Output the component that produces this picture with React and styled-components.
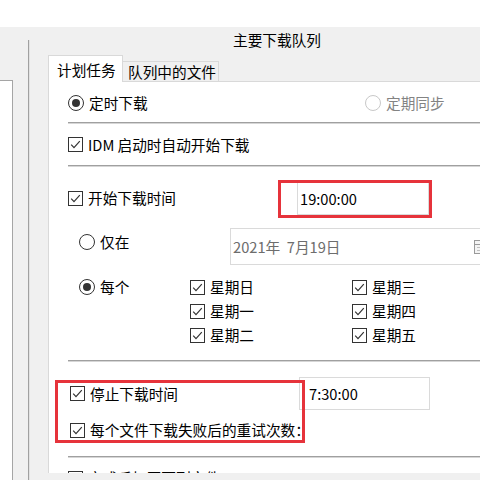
import React from "react";
import styled, { createGlobalStyle } from "styled-components";

const Global = createGlobalStyle`
  html, body { margin: 0; padding: 0; background: #ffffff; }
  body { font-family: "Noto Sans CJK SC", "Noto Sans", sans-serif; }
  * { box-sizing: border-box; }
`;

const Screen = styled.div`
  width: 480px;
  height: 480px;
  overflow: hidden;
  display: flex;
  flex-direction: column;
  background: #ffffff;
  font-family: "Noto Sans CJK SC", "Noto Sans", sans-serif;
  font-size: 14.67px;
  color: #000;
`;

const TopBand = styled.div`
  height: 27px;
  flex: none;
  background: #ffffff;
`;

const Body = styled.div`
  flex: 1;
  display: flex;
  background: #f0f0f0;
  min-height: 0;
`;

const LeftPane = styled.div`
  width: 28px;
  flex: none;
  padding-top: 53px;
`;

const ListBox = styled.div`
  width: 13px;
  height: 100%;
  background: #ffffff;
  border-top: 1px solid #a5a5a5;
  border-right: 1px solid #a5a5a5;
`;

const VDivider = styled.div`
  width: 2px;
  flex: none;
  margin-top: 13px;
  border-left: 1px solid #a0a0a0;
  border-right: 1px solid #e2e2e2;
`;

const Main = styled.div`
  flex: 1;
  min-width: 0;
  display: flex;
  flex-direction: column;
`;

const Title = styled.div`
  height: 28px;
  padding-left: 203px;
  padding-top: 3px;
  line-height: 20px;
  white-space: nowrap;
`;

const TabRow = styled.div`
  display: flex;
  align-items: flex-end;
  height: 26px;
  margin-left: 18px;
  position: relative;
  z-index: 2;
`;

const Tab = styled.div`
  white-space: nowrap;
  line-height: 20px;
  border: 1px solid #d9d9d9;
  border-bottom: none;
  background: ${(p) => (p.$active ? "#ffffff" : "#f0f0f0")};
  height: ${(p) => (p.$active ? "27px" : "20px")};
  margin-bottom: ${(p) => (p.$active ? "-1px" : "0")};
  padding: ${(p) => (p.$active ? "4px 0 0 8px" : "0 0 0 5px")};
  width: ${(p) => p.$w}px;
  margin-left: ${(p) => (p.$active ? "0" : "-1px")};
`;

const Panel = styled.div`
  position: relative;
  margin-left: 18px;
  height: 392px;
  flex: none;
  background: #ffffff;
  border-left: 1px solid #d9d9d9;
  border-top: 1px solid #d9d9d9;
  padding-left: 19px;
  overflow: hidden;
  display: flex;
  flex-direction: column;
`;

const Row = styled.div`
  display: grid;
  grid-template-columns: ${(p) => p.$cols || "1fr"};
  align-items: ${(p) => p.$align || "center"};
  height: ${(p) => p.$h}px;
  margin-top: ${(p) => p.$mt || 0}px;
  padding-top: ${(p) => p.$pt || 0}px;
  flex: none;
`;

const Separator = styled.div`
  height: 2px;
  flex: none;
  margin-top: ${(p) => p.$mt || 0}px;
  border-top: 1px solid #a0a0a0;
  border-bottom: 1px solid #d6d6d6;
`;

const Label = styled.label`
  display: flex;
  align-items: center;
  gap: 5px;
  line-height: 20px;
  white-space: nowrap;
  padding-left: ${(p) => p.$pl || 0}px;
  margin-top: ${(p) => p.$mt || 0}px;
  color: ${(p) => (p.$disabled ? "#838383" : "#000")};
`;

const Box = styled.span`
  width: 15px;
  height: 15px;
  flex: none;
  border: 1px solid #333333;
  background: #ffffff;
  display: flex;
  align-items: center;
  justify-content: center;
`;

const Circle = styled.span`
  width: 16px;
  height: 16px;
  flex: none;
  border-radius: 50%;
  border: 1px solid ${(p) => (p.$disabled ? "#c8c8c8" : "#333333")};
  background: #ffffff;
  display: flex;
  align-items: center;
  justify-content: center;
  &::after {
    content: "";
    display: ${(p) => (p.$on ? "block" : "none")};
    width: 8px;
    height: 8px;
    border-radius: 50%;
    background: #333333;
  }
`;

const Field = styled.div`
  height: ${(p) => p.$h}px;
  width: ${(p) => p.$w}px;
  border: 1px solid #dadada;
  background: #ffffff;
  padding-left: ${(p) => p.$pl}px;
  display: flex;
  align-items: center;
  white-space: pre;
  color: ${(p) => p.$color || "#000"};
  position: relative;
`;

const CalIcon = styled.svg`
  position: absolute;
  left: 243px;
  top: 11px;
`;

const DayGrid = styled.div`
  display: grid;
  grid-template-rows: repeat(3, 24px);
  align-items: center;
`;

const Annot = styled.div`
  position: absolute;
  border: 3px solid #e6333b;
  left: ${(p) => p.$x}px;
  top: ${(p) => p.$y}px;
  width: ${(p) => p.$w}px;
  height: ${(p) => p.$hh}px;
  pointer-events: none;
`;

const BottomStrip = styled.div`
  flex: 1;
`;

function Check({ children, ...rest }) {
  return (
    <Label {...rest}>
      <Box>
        <svg width="13" height="13" viewBox="0 0 13 13">
          <polyline
            points="2.2,6.6 5,9.6 10.8,3.2"
            fill="none"
            stroke="#333"
            strokeWidth="1.2"
          />
        </svg>
      </Box>
      {children}
    </Label>
  );
}

function Radio({ on, disabled, children, ...rest }) {
  return (
    <Label $disabled={disabled} {...rest}>
      <Circle $on={on} $disabled={disabled} />
      {children}
    </Label>
  );
}

function PlainCheck({ children }) {
  return (
    <Label>
      <Box />
      {children}
    </Label>
  );
}

export default function App() {
  return (
    <Screen>
      <Global />
      <TopBand />
      <Body>
        <LeftPane>
          <ListBox />
        </LeftPane>
        <VDivider />
        <Main>
          <Title>主要下载队列</Title>
          <TabRow>
            <Tab $active $w={75}>计划任务</Tab>
            <Tab $w={97}>队列中的文件</Tab>
          </TabRow>
          <Panel>
            <Row $h={40} $pt={2} $cols="297px 1fr">
              <Radio on>定时下载</Radio>
              <Radio disabled>定期同步</Radio>
            </Row>
            <Separator />
            <Row $h={41}>
              <Check>IDM 启动时自动开始下载</Check>
            </Row>
            <Separator />
            <Row $h={48} $pt={14} $align="start" $cols="229px 1fr">
              <Check $mt={7}>开始下载时间</Check>
              <Field $h={34} $w={132} $pl={2}>19:00:00</Field>
            </Row>
            <Row $h={37} $mt={13} $align="start" $cols="162px 1fr">
              <Radio $pl={11} $mt={4}>仅在</Radio>
              <Field $h={37} $w={262} $pl={2} $color="#6d6d6d">
                {"2021年  7月19日"}
                <CalIcon width="14" height="14" viewBox="0 0 14 14">
                  <rect x="0.5" y="0.5" width="13" height="13" fill="#f4f4f4" stroke="#9a9a9a" />
                  <line x1="1" y1="4.5" x2="13" y2="4.5" stroke="#9a9a9a" />
                  <line x1="3" y1="7.5" x2="11" y2="7.5" stroke="#c0c0c0" />
                  <line x1="3" y1="10.5" x2="11" y2="10.5" stroke="#c0c0c0" />
                </CalIcon>
              </Field>
            </Row>
            <Row $h={72} $mt={10} $align="start" $cols="122px 162px 1fr">
              <Radio on $pl={11} $mt={2}>每个</Radio>
              <DayGrid>
                <Check>星期日</Check>
                <Check>星期一</Check>
                <Check>星期二</Check>
              </DayGrid>
              <DayGrid>
                <Check>星期三</Check>
                <Check>星期四</Check>
                <Check>星期五</Check>
              </DayGrid>
            </Row>
            <Separator $mt={13} />
            <Row $h={33} $mt={15} $cols="231px 1fr">
              <Check $pl={2}>停止下载时间</Check>
              <Field $h={33} $w={131} $pl={9}>7:30:00</Field>
            </Row>
            <Row $h={20} $mt={10}>
              <Check $pl={2}>每个文件下载失败后的重试次数：</Check>
            </Row>
            <Separator $mt={16} />
            <Row $h={20} $mt={10}>
              <PlainCheck>完成后打开下列文件</PlainCheck>
            </Row>
            <Annot $x={229} $y={98} $w={154} $hh={38} />
            <Annot $x={6} $y={298} $w={250} $hh={63} />
          </Panel>
          <BottomStrip />
        </Main>
      </Body>
    </Screen>
  );
}
